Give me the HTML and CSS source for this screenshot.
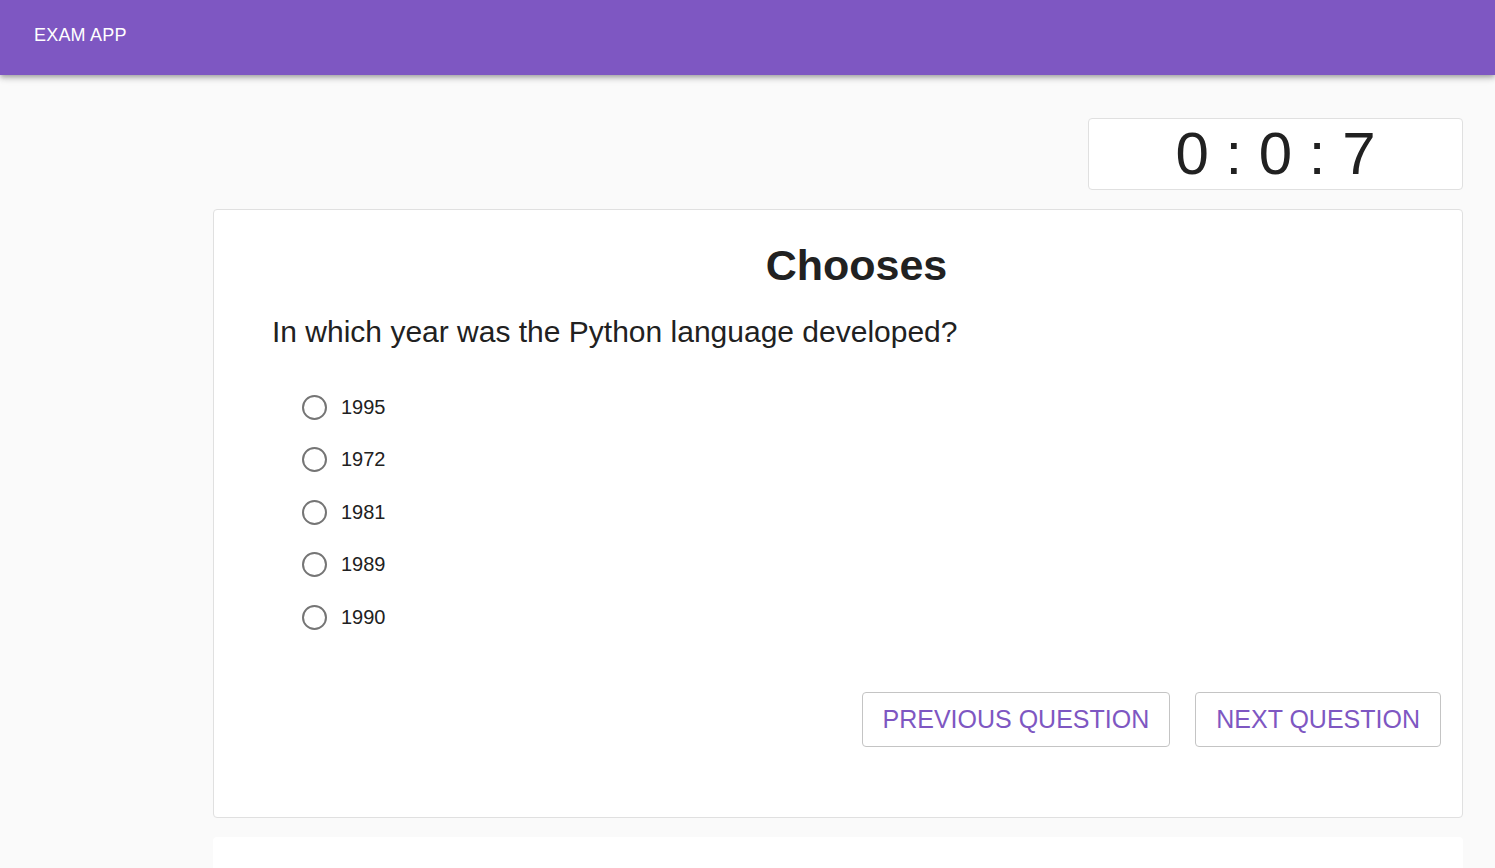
FILE: index.html
```html
<!DOCTYPE html>
<html>
<head>
<meta charset="utf-8">
<title>Exam App</title>
<link rel="stylesheet" href="styles.css">
</head>
<body>
<header class="appbar"><span class="brand">EXAM APP</span></header>
<main class="main">
  <div class="timer-row">
    <div class="timer">0 : 0 : 7</div>
  </div>
  <section class="card">
    <h1 class="title">Chooses</h1>
    <p class="question">In which year was the Python language developed?</p>
    <div class="options">
      <label class="option"><span class="radio"></span><span class="opt-text">1995</span></label>
      <label class="option"><span class="radio"></span><span class="opt-text">1972</span></label>
      <label class="option"><span class="radio"></span><span class="opt-text">1981</span></label>
      <label class="option"><span class="radio"></span><span class="opt-text">1989</span></label>
      <label class="option"><span class="radio"></span><span class="opt-text">1990</span></label>
    </div>
    <div class="actions">
      <button class="btn">PREVIOUS QUESTION</button>
      <button class="btn">NEXT QUESTION</button>
    </div>
  </section>
  <section class="card2"></section>
</main>
</body>
</html>
```
FILE: styles.css
```css
* { box-sizing: border-box; }
html, body { margin: 0; padding: 0; }
body {
  background: #fafafa;
  font-family: "Liberation Sans", Arial, sans-serif;
  color: #212121;
  overflow: hidden;
  height: 868px;
}
.appbar {
  height: 75px;
  background: #7e57c2;
  display: flex;
  align-items: center;
  padding-left: 34px;
  box-shadow: 0 2px 4px -1px rgba(0,0,0,.2), 0 4px 5px 0 rgba(0,0,0,.14), 0 1px 10px 0 rgba(0,0,0,.12);
  position: relative;
  z-index: 1;
}
.brand {
  color: #fff;
  font-size: 18px;
  letter-spacing: 0.2px;
  margin-top: -5px;
}
.main {
  padding: 43px 32px 0 213px;
}
.timer-row {
  display: flex;
  justify-content: flex-end;
}
.timer {
  width: 375px;
  height: 72px;
  background: #fff;
  border: 1px solid #e0e0e0;
  border-radius: 4px;
  font-size: 60px;
  line-height: 70px;
  text-align: center;
  color: #212121;
}
.card {
  margin-top: 19px;
  height: 609px;
  background: #fff;
  border: 1px solid #e0e0e0;
  border-radius: 4px;
  padding: 28px 21px 0 58px;
}
.title {
  margin: 0;
  font-size: 43px;
  font-weight: bold;
  text-align: center;
  line-height: 54px;
  color: #212121;
}
.question {
  margin: 22px 0 0 0;
  font-size: 30px;
  line-height: 36px;
  color: #212121;
}
.options {
  margin-top: 31px;
  padding-left: 30px;
  display: flex;
  flex-direction: column;
}
.option {
  display: flex;
  align-items: center;
  height: 52.5px;
}
.radio {
  width: 25px;
  height: 25px;
  border: 2px solid #757575;
  border-radius: 50%;
  margin-right: 14px;
}
.opt-text {
  font-size: 20px;
  color: #212121;
}
.actions {
  display: flex;
  justify-content: flex-end;
  gap: 25px;
  margin-top: 48px;
}
.btn {
  height: 55px;
  padding: 0 20px;
  background: #fff;
  border: 1px solid #c4c4c4;
  border-radius: 4px;
  color: #7e57c2;
  font-family: "Liberation Sans", Arial, sans-serif;
  font-size: 25px;
}
.card2 {
  margin-top: 19px;
  height: 60px;
  background: #fff;
  border-radius: 4px;
}
```
